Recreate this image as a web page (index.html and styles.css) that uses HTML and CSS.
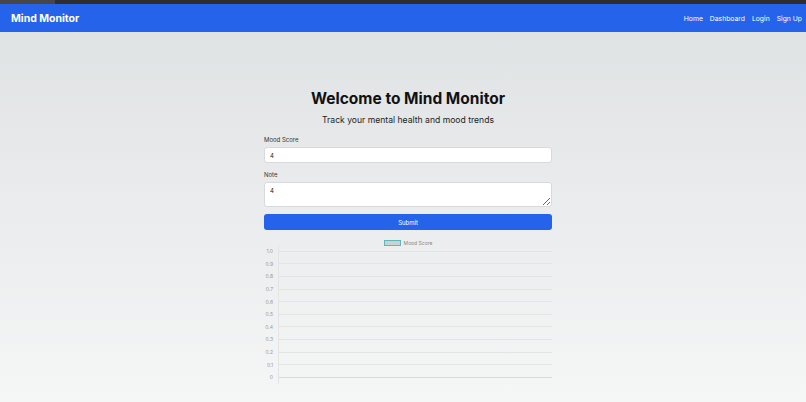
FILE: index.html
```html
<!DOCTYPE html>
<html lang="en">
<head>
    <meta charset="UTF-8">
    <meta name="viewport" content="width=device-width, initial-scale=1.0">
    <title>Mind Monitor</title>
    <link rel="stylesheet" href="styles.css">
</head>
<body>
    <div class="window-strip"><span class="strip-tab"></span></div>
    <nav class="navbar">
        <a class="brand" href="#">Mind Monitor</a>
        <div class="nav-links">
            <a href="#">Home</a>
            <a href="#">Dashboard</a>
            <a href="#">Login</a>
            <a href="#">Sign Up</a>
        </div>
    </nav>

    <main class="container">
        <h1 class="title">Welcome to Mind Monitor</h1>
        <p class="subtitle">Track your mental health and mood trends</p>

        <form class="mood-form">
            <label class="label" for="score">Mood Score</label>
            <input class="field" id="score" type="text" value="4">

            <label class="label" for="note">Note</label>
            <textarea class="field note" id="note">4</textarea>

            <button class="submit" type="button">Submit</button>
        </form>

        <div class="chart">
            <div class="legend">
                <span class="legend-box"></span>
                <span>Mood Score</span>
            </div>
            <div class="plot">
                <div class="row"><span class="tick">1.0</span><span class="line"></span></div>
                <div class="row"><span class="tick">0.9</span><span class="line"></span></div>
                <div class="row"><span class="tick">0.8</span><span class="line"></span></div>
                <div class="row"><span class="tick">0.7</span><span class="line"></span></div>
                <div class="row"><span class="tick">0.6</span><span class="line"></span></div>
                <div class="row"><span class="tick">0.5</span><span class="line"></span></div>
                <div class="row"><span class="tick">0.4</span><span class="line"></span></div>
                <div class="row"><span class="tick">0.3</span><span class="line"></span></div>
                <div class="row"><span class="tick">0.2</span><span class="line"></span></div>
                <div class="row"><span class="tick">0.1</span><span class="line"></span></div>
                <div class="row zero"><span class="tick">0</span><span class="line"></span></div>
            </div>
        </div>
    </main>
</body>
</html>
```

FILE: styles.css
```css
html, body {
    height: 100%;
}
body {
    margin: 0;
    font-family: 'Inter', 'Noto Sans', sans-serif;
    color: #111;
    background: linear-gradient(#dee1e3, #f5f6f6);
    overflow: hidden;
}
.window-strip {
    height: 4px;
    background-color: #2e2e2e;
}
.strip-tab {
    display: block;
    width: 55px;
    height: 4px;
    background-color: #474747;
}
.navbar {
    height: 28px;
    background-color: #2563eb;
    display: flex;
    align-items: center;
    justify-content: space-between;
    padding: 0 4px 0 11px;
}
.brand {
    color: #fff;
    font-weight: 700;
    font-size: 10.5px;
    text-decoration: none;
}
.nav-links {
    display: flex;
    gap: 7px;
}
.nav-links a {
    color: #fff;
    font-size: 6.8px;
    text-decoration: none;
}
.container {
    width: 288px;
    margin: 0 0 0 calc(50% - 139px);
    padding-top: 57px;
}
.title {
    margin: 0;
    font-size: 15.5px;
    font-weight: 700;
    text-align: center;
    line-height: 20px;
}
.subtitle {
    margin: 5px 0 10px;
    font-size: 8.6px;
    text-align: center;
    color: #222;
    line-height: 12px;
}
.mood-form {
    display: flex;
    flex-direction: column;
}
.label {
    font-size: 6px;
    color: #333;
    line-height: 8px;
    margin-bottom: 3px;
}
.field {
    box-sizing: border-box;
    height: 16px;
    border: 1px solid #d7d9dc;
    border-radius: 3px;
    background-color: #fff;
    padding: 0 5px;
    font-family: inherit;
    font-size: 6px;
    color: #222;
    margin-bottom: 8px;
    outline: none;
}
.field.note {
    height: 25px;
    padding-top: 4px;
    resize: vertical;
    margin-bottom: 7px;
}
.submit {
    height: 16px;
    border: none;
    border-radius: 3px;
    background-color: #2563eb;
    color: #fff;
    font-family: inherit;
    font-size: 6px;
    cursor: pointer;
}
.chart {
    margin-top: 9px;
}
.legend {
    display: flex;
    justify-content: center;
    align-items: center;
    gap: 3px;
    font-size: 5px;
    color: #888;
    height: 8px;
}
.legend-box {
    box-sizing: border-box;
    width: 17px;
    height: 6px;
    border: 1px solid #5fb8b8;
    background-color: #c9d3d3;
}
.plot {
    margin-top: -2px;
}
.row {
    display: flex;
    align-items: center;
    height: 12.6px;
}
.tick {
    width: 9px;
    text-align: right;
    font-size: 5px;
    color: #999;
    margin-right: 5px;
}
.line {
    flex: 1;
    height: 100%;
    border-left: 1px solid #e4e4e4;
    background: linear-gradient(#e4e4e4, #e4e4e4) center / 100% 1px no-repeat;
}
.row.zero .line {
    background-image: linear-gradient(#dadada, #dadada);
}
```
